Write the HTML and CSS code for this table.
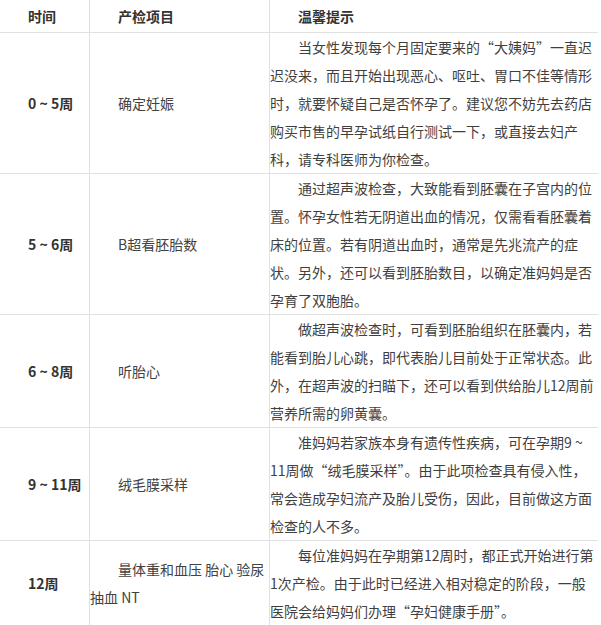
FILE: index.html
```html
<!DOCTYPE html>
<html lang="zh-CN">
<head>
<meta charset="utf-8">
<title>孕早期产检</title>
<link rel="stylesheet" href="styles.css">
</head>
<body>
<table class="exam">
  <colgroup>
    <col class="c-time">
    <col class="c-item">
    <col class="c-tip">
  </colgroup>
  <thead>
    <tr class="head">
      <th>时间</th>
      <th>产检项目</th>
      <th>温馨提示</th>
    </tr>
  </thead>
  <tbody>
    <tr>
      <td class="time">0 ~ 5周</td>
      <td class="item">确定妊娠</td>
      <td class="tip">当女性发现每个月固定要来的“大姨妈”一直迟迟没来，而且开始出现恶心、呕吐、胃口不佳等情形时，就要怀疑自己是否怀孕了。建议您不妨先去药店购买市售的早孕试纸自行测试一下，或直接去妇产科，请专科医师为你检查。</td>
    </tr>
    <tr>
      <td class="time">5 ~ 6周</td>
      <td class="item">B超看胚胎数</td>
      <td class="tip">通过超声波检查，大致能看到胚囊在子宫内的位置。怀孕女性若无阴道出血的情况，仅需看看胚囊着床的位置。若有阴道出血时，通常是先兆流产的症状。另外，还可以看到胚胎数目，以确定准妈妈是否孕育了双胞胎。</td>
    </tr>
    <tr>
      <td class="time">6 ~ 8周</td>
      <td class="item">听胎心</td>
      <td class="tip">做超声波检查时，可看到胚胎组织在胚囊内，若能看到胎儿心跳，即代表胎儿目前处于正常状态。此外，在超声波的扫瞄下，还可以看到供给胎儿12周前营养所需的卵黄囊。</td>
    </tr>
    <tr>
      <td class="time">9 ~ 11周</td>
      <td class="item">绒毛膜采样</td>
      <td class="tip">准妈妈若家族本身有遗传性疾病，可在孕期9 ~ 11&#8288;周做“绒毛膜采样”。由于此项检查具有侵入性，常会造成孕妇流产及胎儿受伤，因此，目前做这方面检查的人不多。</td>
    </tr>
    <tr>
      <td class="time">12周</td>
      <td class="item">量体重和血压 胎心 验尿 抽血 NT</td>
      <td class="tip">每位准妈妈在孕期第12周时，都正式开始进行第1次产检。由于此时已经进入相对稳定的阶段，一般医院会给妈妈们办理“孕妇健康手册”。</td>
    </tr>
  </tbody>
</table>
</body>
</html>
```

FILE: styles.css
```css
html, body {
  margin: 0;
  padding: 0;
  background: #ffffff;
}

body {
  font-family: "Noto Sans CJK SC", "Noto Sans", sans-serif;
  font-size: 14px;
  color: #3f3f3f;
  overflow: hidden;
}

.exam {
  border-collapse: separate;
  border-spacing: 0;
  table-layout: fixed;
  width: 598px;
}

.c-time { width: 90px; }
.c-item { width: 180px; }
.c-tip { width: 328px; }

.exam th,
.exam td {
  box-sizing: border-box;
  padding: 0;
  border-right: 1px solid #e1e1e1;
  border-bottom: 1px solid #e1e1e1;
  text-indent: 2em;
  text-align: left;
  line-height: 28px;
  vertical-align: middle;
}

.exam th:last-child,
.exam td:last-child {
  border-right: 0;
}

.head th {
  height: 33px;
  font-weight: bold;
  color: #333333;
  padding-bottom: 1px;
}

.time {
  font-weight: bold;
  color: #333333;
}

.item {
  color: #424242;
}

.tip {
  color: #3f3f3f;
}
```
